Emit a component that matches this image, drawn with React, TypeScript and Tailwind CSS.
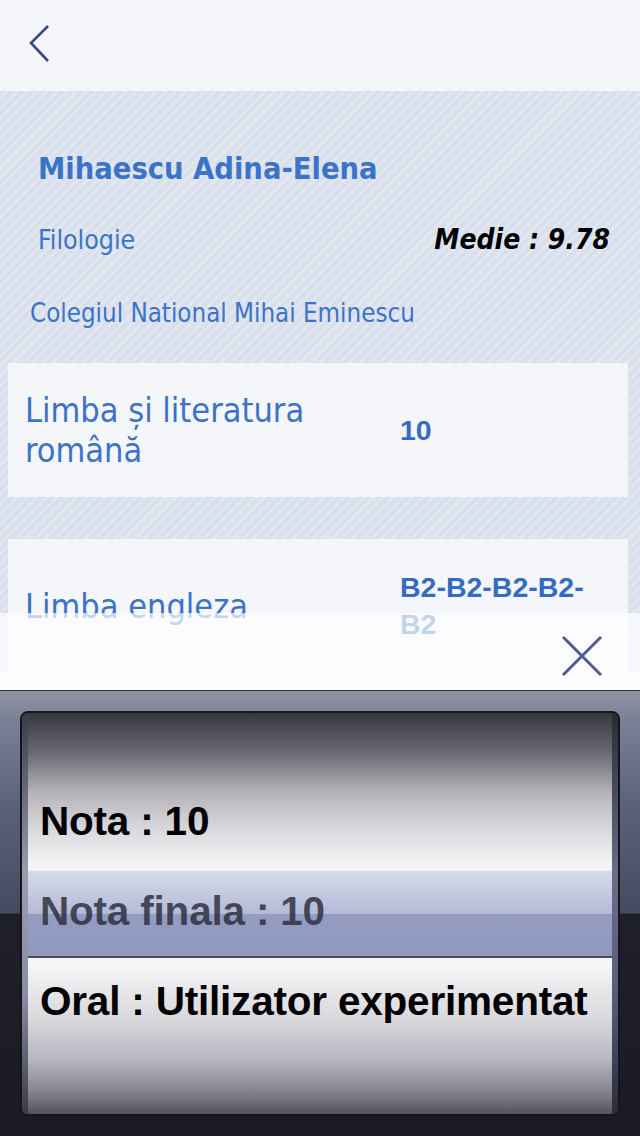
const stripes =
  'bg-[repeating-linear-gradient(135deg,#d9e0ec_0px,#d9e0ec_4px,#e1e7f1_4px,#e1e7f1_7px)]';

function BackChevron() {
  return (
    <svg width="26" height="40" viewBox="0 0 26 40" className="block">
      <polyline points="21,2 4,19 21,37" fill="none" stroke="#3b4a7e" strokeWidth="2.6" />
    </svg>
  );
}

function CloseIcon() {
  return (
    <svg width="40" height="40" viewBox="0 0 40 40" className="block">
      <line x1="1" y1="1" x2="39" y2="39" stroke="#4b5d8f" strokeWidth="3" />
      <line x1="39" y1="1" x2="1" y2="39" stroke="#4b5d8f" strokeWidth="3" />
    </svg>
  );
}

interface SubjectCardProps {
  label: string;
  value: string;
}

function SubjectCard({ label, value }: SubjectCardProps) {
  return (
    <div className="ml-[8px] w-[620px] h-[134px] bg-[#f4f6fa] flex items-center">
      <div className="w-[392px] pl-[17px] pr-4 text-[34px] leading-[40px] text-[#3c72c8]">
        {label}
      </div>
      <div className="w-[200px] text-[28.5px] leading-[37px] font-bold text-[#356bc2] font-['Liberation_Sans',Arial,sans-serif] break-words">
        {value}
      </div>
    </div>
  );
}

const rows = ['Nota : 10', 'Nota finala : 10', 'Oral : Utilizator experimentat'];

function Picker() {
  return (
    <div className="h-[445px] pt-[20px] px-[20px] bg-[linear-gradient(to_bottom,#8e93a3_0px,#7a8095_30px,#5a6078_120px,#454a60_222px,#1e1f2a_223px,#1a1b24_100%)]">
      <div className="relative h-[405px] rounded-[8px] border-2 border-[#15161c] overflow-hidden bg-[linear-gradient(to_bottom,#36363d_0px,#6a6a73_40px,#b4b4ba_80px,#dcdce0_120px,#f3f3f4_150px,#fafafa_175px,#f6f6f7_250px,#dcdce0_300px,#b8b9c2_345px,#80818d_380px,#4a4a56_405px)]">
        {/* selection bar */}
        <div className="absolute left-0 right-0 top-[157px] h-[88px] border-t border-[#eef0f6] border-b-2 border-b-[#4a4c5c] flex flex-col">
          <div className="h-[43px] bg-[linear-gradient(to_bottom,#d6daec,#b4b9d6)]" />
          <div className="flex-1 bg-[linear-gradient(to_bottom,#959cc2,#9299c0)] border-l-[6px] border-l-[#7a80c8] border-r-[6px] border-r-[#6a6ab8]" />
        </div>
        <div className="relative flex h-full">
          <div className="w-[6px] bg-[linear-gradient(to_bottom,#3a3a48,#9a9cb0_40%,#8a8ca4_70%,#3a3a4a)]" />
          <div className="flex-1 pt-[63px] pl-[12px] font-['Liberation_Sans',Arial,sans-serif] font-bold text-[40.5px] text-black">
            {rows.map((r, i) => (
              <div
                key={r}
                className={`h-[90px] flex items-center whitespace-nowrap tracking-[-0.2px] ${i === 1 ? 'text-[#2f3142]/85' : ''}`}
              >
                {r}
              </div>
            ))}
          </div>
          <div className="w-[6px] bg-[linear-gradient(to_bottom,#2a2a36,#6a6c88_40%,#5a5c7e_70%,#2a2a38)]" />
        </div>
      </div>
    </div>
  );
}

export default function App() {
  return (
    <div className="w-[640px] h-[1136px] overflow-hidden flex flex-col bg-[#f8f9fb] font-['DejaVu_Sans_Condensed','DejaVu_Sans',sans-serif]">
      <header className="h-[91px] bg-[#f4f6fa] pl-[27px] pt-[24px]">
        <BackChevron />
      </header>

      <main className="relative h-[599px]">
        <section className={`h-[582px] overflow-hidden ${stripes}`}>
          <h1 className="pt-[58px] pl-[38px] text-[30.5px] leading-[40px] font-bold text-[#3b73c9]">
            Mihaescu Adina-Elena
          </h1>
          <div className="mt-[35px] h-[32px] pl-[38px] pr-[30px] flex items-baseline justify-between leading-[32px]">
            <span className="text-[26.5px] text-[#3b73c9]">Filologie</span>
            <span className="text-[28px] font-bold italic text-black">Medie : 9.78</span>
          </div>
          <div className="mt-[41px] pl-[30px] text-[25.7px] leading-[32px] text-[#3b73c9]">
            Colegiul National Mihai Eminescu
          </div>
          <div className="mt-[34px] flex flex-col gap-[42px]">
            <SubjectCard label="Limba și literatura română" value="10" />
            <SubjectCard label="Limba engleza" value="B2-B2-B2-B2-B2" />
          </div>
        </section>

        {/* accessory bar over the list */}
        <div className="absolute left-0 right-0 top-[522px] h-[77px] bg-white/70 flex justify-end pt-[23px] pr-[38px]">
          <CloseIcon />
        </div>
      </main>

      <div className="h-[1px] bg-[#2c2e36]" />
      <Picker />
    </div>
  );
}
